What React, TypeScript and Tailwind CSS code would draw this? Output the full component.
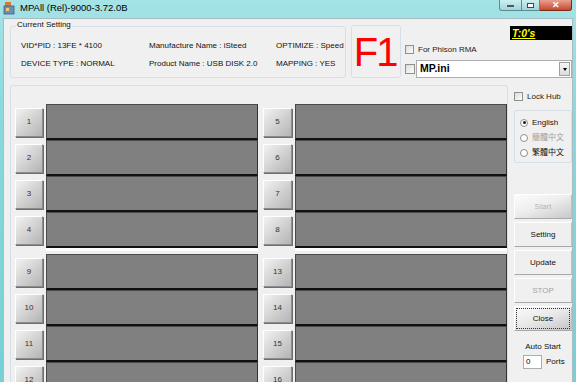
import React from 'react'

const font = "font-['Liberation_Sans','Noto_Sans_CJK_TC',sans-serif]"

function PortButton({ n, w = 'w-[28px]' }: { n: number; w?: string }) {
  return (
    <div
      className={`${w} h-[29px] flex items-center justify-center text-[8px] text-[#333] border-t border-l border-t-white border-l-white border-b border-r border-b-[#8c8c8c] border-r-[#8c8c8c] bg-[linear-gradient(135deg,#f2f2f2_0%,#d6d6d6_45%,#b4b4b4_100%)] shadow-[1px_1px_0_#6e6e6e]`}
    >
      {n}
    </div>
  )
}

function Panel() {
  return (
    <div className="w-[212px] h-[36px] bg-[#808080] border-t border-l border-t-[#4a4a4a] border-l-[#4a4a4a] border-b-2 border-r border-b-[#111] border-r-[#333]" />
  )
}

function Row({ left, right }: { left: number; right: number }) {
  return (
    <div className="flex h-[36px] items-center">
      <div className="w-[28px] ml-[4px] flex items-center">
        <PortButton n={left} />
      </div>
      <div className="ml-[3px]">
        <Panel />
      </div>
      <div className="ml-[5px] flex items-center">
        <PortButton n={right} w="w-[29px]" />
      </div>
      <div className="ml-[3px]">
        <Panel />
      </div>
    </div>
  )
}

function Gap() {
  return (
    <div className="flex h-[6px]">
      <div className="w-[35px]" />
      <div className="w-[212px] h-[3px] bg-white" />
      <div className="w-[37px]" />
      <div className="w-[212px] h-[3px] bg-white" />
    </div>
  )
}

function Check({ className = '' }: { className?: string }) {
  return (
    <div
      className={`w-[9px] h-[9px] border border-[#8e8f8f] bg-[linear-gradient(135deg,#dcdcdc,#fdfdfd)] ${className}`}
    />
  )
}

function Radio({ on, label, disabled }: { on?: boolean; label: string; disabled?: boolean }) {
  return (
    <div className="flex items-center h-[15px]">
      <div className="w-[8px] h-[8px] rounded-full border border-[#8e8f8f] bg-white flex items-center justify-center">
        {on && <div className="w-[3px] h-[3px] rounded-full bg-[#1a1a1a]" />}
      </div>
      <span className={`ml-[4px] text-[8px] ${disabled ? 'text-[#a0a0a0]' : 'text-[#111]'}`}>{label}</span>
    </div>
  )
}

function SideButton({ label, kind = 'normal' }: { label: string; kind?: 'normal' | 'disabled' | 'grad' | 'focus' }) {
  const base =
    'w-[58px] h-[25px] flex items-center justify-center text-[8px] border-t border-l border-t-white border-l-white border-b border-r border-b-[#a8a8a8] border-r-[#c0c0c0]'
  const look =
    kind === 'disabled'
      ? 'bg-[#f0f0f0] text-[#a3a3a3]'
      : kind === 'grad'
        ? 'bg-[linear-gradient(160deg,#fcfcfc_0%,#eeeeee_45%,#c8c8c8_100%)] text-[#b5b5b5]'
        : kind === 'focus'
          ? 'bg-[linear-gradient(160deg,#fafafa_0%,#e8e8e8_50%,#c4c4c4_100%)] text-[#111]'
          : 'bg-[#efefef] text-[#111]'
  return (
    <div className={`${base} ${look}`}>
      {kind === 'focus' ? (
        <div className="w-[54px] h-[21px] border border-dotted border-[#333] flex items-center justify-center">
          {label}
        </div>
      ) : (
        label
      )}
    </div>
  )
}

export default function App() {
  return (
    <div
      className={`w-[576px] h-[382px] overflow-hidden bg-[linear-gradient(180deg,#a4e3e6_0%,#8ad9dd_30%,#76d0d5_100%)] ${font}`}
    >
      {/* Title bar */}
      <div className="h-[18px] flex items-start relative">
        <svg width="12" height="13" viewBox="0 0 12 13" className="ml-[3px] mt-[2px]">
          <rect x="2" y="0" width="6" height="5" fill="#e0782a" />
          <rect x="1" y="4" width="10" height="8" fill="#6b8fb6" stroke="#3d5c80" strokeWidth="0.8" />
          <rect x="3" y="6" width="3" height="3" fill="#f3c766" />
        </svg>
        <span className="ml-[5px] mt-[3px] text-[9.5px] text-black leading-none">MPAll (Rel)-9000-3.72.0B</span>
        <div className="absolute right-[4px] top-0 flex">
          <div className="w-[23px] h-[11px] rounded-bl-[3px] border border-t-0 border-[#5e8b92] bg-[linear-gradient(180deg,#cdeff0,#9ed7db)] flex items-center justify-center">
            <div className="w-[7px] h-[2px] bg-white border border-[#555] mt-[2px]" />
          </div>
          <div className="w-[18px] h-[11px] border border-t-0 border-l-0 border-[#5e8b92] bg-[linear-gradient(180deg,#cdeff0,#9ed7db)] flex items-center justify-center">
            <div className="w-[7px] h-[5px] border border-[#444] bg-white" />
          </div>
          <div className="w-[32px] h-[11px] rounded-br-[3px] border border-t-0 border-l-0 border-[#7a2a1c] bg-[linear-gradient(180deg,#e9a08f,#c7472f)] flex items-center justify-center text-white text-[9px] font-bold leading-none">
            ✕
          </div>
        </div>
      </div>

      {/* Client area */}
      <div className="mx-[3px] h-[364px] bg-[#f0f0f0] border-t border-l border-r border-[#a9bcc2] overflow-hidden">
        {/* Top section */}
        <div className="flex pt-[6px] h-[61px]">
          <div className="ml-[6px] w-[337px] h-[52px] mt-[1px] border border-[#d5dfe5] rounded-[3px] relative">
            <span className="absolute -top-[6px] left-[5px] px-[1px] bg-[#f0f0f0] text-[8px] text-[#111] leading-none">
              Current Setting
            </span>
            <div className="grid grid-cols-[128px_127px_1fr] gap-y-[9px] pl-[10px] pt-[14px] text-[8px] text-[#111] leading-[9px]">
              <span>VID*PID : 13FE * 4100</span>
              <span>Manufacture Name : iSteed</span>
              <span>OPTIMIZE : Speed</span>
              <span>DEVICE TYPE : NORMAL</span>
              <span>Product Name : USB DISK 2.0</span>
              <span>MAPPING : YES</span>
            </div>
          </div>
          <div className="ml-[5px] w-[50px] h-[53px] border border-[#d5dfe5] rounded-[3px] flex items-center justify-center">
            <span className="text-[40px] leading-none text-[#ff0000] tracking-[-2px] mr-[2px]">F1</span>
          </div>
          <div className="ml-[4px] flex-1 flex flex-col">
            <div className="flex justify-end">
              <div className="w-[62px] h-[14px] bg-black mt-[1px] flex items-center pl-[2px]">
                <span className="text-[10.5px] font-bold italic text-[#ffff00] underline leading-none">T:0's</span>
              </div>
            </div>
            <div className="flex items-center mt-[5px] h-[9px]">
              <Check />
              <span className="ml-[4px] text-[8px] text-[#222]">For Phison RMA</span>
            </div>
            <div className="flex items-center mt-[6px]">
              <Check className="w-[10px] h-[10px]" />
              <div className="ml-[1px] w-[156px] h-[18px] bg-white border border-[#abadb3] flex items-center">
                <span className="ml-[3px] text-[10.5px] font-bold text-black">MP.ini</span>
                <div className="ml-auto mr-[1px] w-[11px] h-[14px] border border-[#a0a0a0] bg-[linear-gradient(180deg,#f6f6f6,#dcdcdc)] flex items-center justify-center">
                  <div className="w-0 h-0 border-l-[2.5px] border-r-[2.5px] border-t-[3px] border-l-transparent border-r-transparent border-t-black" />
                </div>
              </div>
            </div>
          </div>
        </div>

        {/* Main section */}
        <div className="flex mt-[5px]">
          <div className="ml-[6px] w-[498px] h-[320px] border border-[#d5dfe5] rounded-[3px] pt-[18px]">
            <Row left={1} right={5} />
            <Row left={2} right={6} />
            <Row left={3} right={7} />
            <Row left={4} right={8} />
            <Gap />
            <Row left={9} right={13} />
            <Row left={10} right={14} />
            <Row left={11} right={15} />
            <Row left={12} right={16} />
          </div>

          <div className="ml-[6px] w-[58px] flex flex-col">
            <div className="flex items-center mt-[7px] h-[9px]">
              <Check />
              <span className="ml-[4px] text-[8px] text-[#222]">Lock Hub</span>
            </div>
            <div className="mt-[9px] h-[53px] border border-[#d5dfe5] rounded-[2px] pl-[5px] pt-[4px]">
              <Radio on label="English" />
              <Radio label="簡體中文" disabled />
              <Radio label="繁體中文" />
            </div>
            <div className="mt-[31px] flex flex-col gap-[3px]">
              <SideButton label="Start" kind="grad" />
              <SideButton label="Setting" />
              <SideButton label="Update" />
              <SideButton label="STOP" kind="disabled" />
              <SideButton label="Close" kind="focus" />
            </div>
            <div className="mt-[12px] text-center text-[8px] text-[#111] leading-none">Auto Start</div>
            <div className="flex items-center mt-[4px] ml-[9px]">
              <div className="w-[19px] h-[14px] bg-white border border-[#abadb3] text-[8px] pl-[2px] leading-[12px]">0</div>
              <span className="ml-[4px] text-[8px] text-[#111]">Ports</span>
            </div>
          </div>
        </div>
      </div>
    </div>
  )
}
